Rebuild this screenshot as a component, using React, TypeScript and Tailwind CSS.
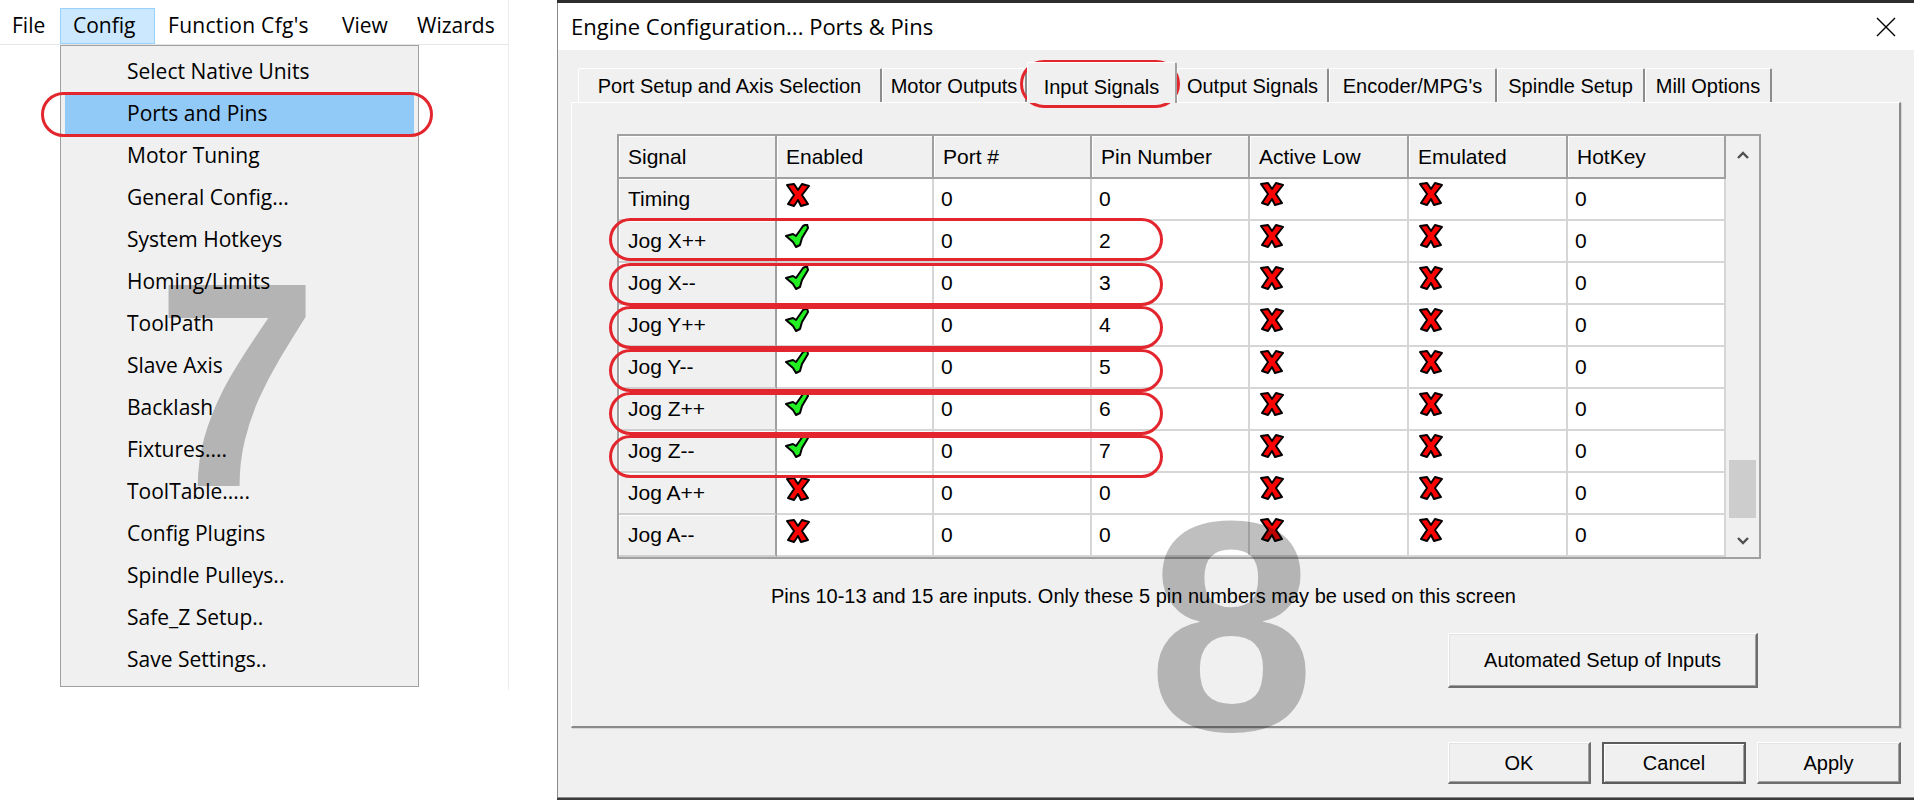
import React from "react";

type Mark = "x" | "ok";
type Row = { signal: string; enabled: Mark; port: string; pin: string };

const ROWS: Row[] = [
  { signal: "Timing", enabled: "x", port: "0", pin: "0" },
  { signal: "Jog X++", enabled: "ok", port: "0", pin: "2" },
  { signal: "Jog X--", enabled: "ok", port: "0", pin: "3" },
  { signal: "Jog Y++", enabled: "ok", port: "0", pin: "4" },
  { signal: "Jog Y--", enabled: "ok", port: "0", pin: "5" },
  { signal: "Jog Z++", enabled: "ok", port: "0", pin: "6" },
  { signal: "Jog Z--", enabled: "ok", port: "0", pin: "7" },
  { signal: "Jog A++", enabled: "x", port: "0", pin: "0" },
  { signal: "Jog A--", enabled: "x", port: "0", pin: "0" },
];

const HEADERS = ["Signal", "Enabled", "Port #", "Pin Number", "Active Low", "Emulated", "HotKey"];

const MENU_ITEMS = [
  "Select Native Units",
  "Ports and Pins",
  "Motor Tuning",
  "General Config...",
  "System Hotkeys",
  "Homing/Limits",
  "ToolPath",
  "Slave Axis",
  "Backlash",
  "Fixtures....",
  "ToolTable.....",
  "Config Plugins",
  "Spindle Pulleys..",
  "Safe_Z Setup..",
  "Save Settings..",
];

const TABS = [
  { label: "Port Setup and Axis Selection", w: "w-[304px]" },
  { label: "Motor Outputs", w: "w-[145px]" },
  { label: "Input Signals", w: "w-[150px]", active: true },
  { label: "Output Signals", w: "w-[152px]" },
  { label: "Encoder/MPG's", w: "w-[168px]" },
  { label: "Spindle Setup", w: "w-[148px]" },
  { label: "Mill Options", w: "w-[127px]" },
];

// red marker rings drawn over the rows that were changed
const ROW_RINGS = ["top-[218px]", "top-[263px]", "top-[306px]", "top-[349px]", "top-[392px]", "top-[435px]"];

const WIN = "font-['Liberation_Sans',Arial,sans-serif]";
const UI = "font-['Open_Sans','Noto_Sans',sans-serif]";

function XMark() {
  return (
    <svg width="26" height="26" viewBox="0 0 26 26">
      <polygon
        points="2,3 9,2 13,8 17,2 24,4 17,13 23,22 16,24 13,18 9,24 3,22 9,13"
        fill="#ff0000"
        stroke="#000"
        strokeWidth="2"
        strokeLinejoin="round"
      />
    </svg>
  );
}

function CheckMark() {
  return (
    <svg width="26" height="24" viewBox="0 0 26 24">
      <polygon
        points="1,12 8,10 11,12 18,2 22,0 23,4 17,14 15,21 11,23 8,18"
        fill="#22ee22"
        stroke="#000"
        strokeWidth="2"
        strokeLinejoin="round"
      />
    </svg>
  );
}

function Icon({ mark }: { mark: Mark }) {
  return mark === "x" ? <XMark /> : <CheckMark />;
}

function WinButton({ label, className, isDefault }: { label: string; className: string; isDefault?: boolean }) {
  return (
    <div
      className={
        isDefault
          ? `flex items-center justify-center border-2 border-[#5c5c5c] bg-[#f0f0f0] text-[20px] text-black shadow-[inset_1px_1px_0_#fff,inset_-1px_-1px_0_#a0a0a0] ${className}`
          : `flex items-center justify-center border-t border-l border-white border-r-2 border-b-2 border-r-[#6e6e6e] border-b-[#6e6e6e] bg-[#f0f0f0] text-[20px] text-black shadow-[inset_1px_1px_0_#e3e3e3,inset_-1px_-1px_0_#a0a0a0] ${className}`
      }
    >
      {label}
    </div>
  );
}

function Ring({ className }: { className: string }) {
  return <div className={`pointer-events-none absolute rounded-full border-[3px] border-[#e3262d] ${className}`} />;
}

function MenuSide() {
  return (
    <div className={`w-[557px] shrink-0 ${UI}`}>
      <div className="h-[690px] w-[509px] border-r border-[#ececec]">
        {/* menu bar */}
        <div className="flex h-[45px] items-end border-b border-[#e6e6e6] text-[21px] text-black">
          <div className="flex h-[36px] w-[60px] items-center pl-[12px]">File</div>
          <div className="flex h-[36px] w-[95px] items-center border border-[#99d1ff] bg-[#cce8ff] pl-[12px]">Config</div>
          <div className="flex h-[36px] w-[174px] items-center pl-[13px] tracking-[0.3px]">Function Cfg's</div>
          <div className="flex h-[36px] w-[75px] items-center pl-[13px]">View</div>
          <div className="flex h-[36px] w-[104px] items-center pl-[13px]">Wizards</div>
        </div>

        {/* config dropdown */}
        <div className="ml-[60px] w-[359px] border border-[#a0a0a0] bg-[#f0f0f0] py-[5px] text-[21px] text-black">
          {MENU_ITEMS.map((item) => (
            <div
              key={item}
              className={
                item === "Ports and Pins"
                  ? "mx-[4px] flex h-[42px] items-center bg-[#91c9f7] pl-[62px]"
                  : "mx-[4px] flex h-[42px] items-center pl-[62px]"
              }
            >
              {item}
            </div>
          ))}
        </div>
      </div>
    </div>
  );
}

function SignalGrid() {
  return (
    <div className="flex h-[425px] w-[1144px] border-2 border-[#a0a0a0] bg-white">
      <div className="grid grid-cols-[158px_157px_158px_158px_159px_159px_158px] content-start">
        {HEADERS.map((h) => (
          <div
            key={h}
            className="flex h-[43px] items-center border-r-2 border-b-2 border-[#a0a0a0] bg-[#f0f0f0] pl-[9px] text-[21px] shadow-[inset_1px_1px_0_#fff]"
          >
            {h}
          </div>
        ))}
        {ROWS.map((r) => (
          <React.Fragment key={r.signal}>
            <div className="flex h-[42px] items-center border-r-2 border-b-2 border-r-[#a0a0a0] border-b-[#cfcfcf] bg-[#f0f0f0] pl-[9px] text-[21px] shadow-[inset_1px_1px_0_#fff]">
              {r.signal}
            </div>
            <div className="flex h-[42px] items-start border-r-2 border-b-2 border-[#d6d6d6] pl-[8px] pt-[3px]">
              <Icon mark={r.enabled} />
            </div>
            <div className="flex h-[42px] items-center border-r-2 border-b-2 border-[#d6d6d6] pl-[7px] text-[21px]">{r.port}</div>
            <div className="flex h-[42px] items-center border-r-2 border-b-2 border-[#d6d6d6] pl-[7px] text-[21px]">{r.pin}</div>
            <div className="flex h-[42px] items-start border-r-2 border-b-2 border-[#d6d6d6] pl-[9px] pt-[2px]">
              <XMark />
            </div>
            <div className="flex h-[42px] items-start border-r-2 border-b-2 border-[#d6d6d6] pl-[9px] pt-[2px]">
              <XMark />
            </div>
            <div className="flex h-[42px] items-center border-r-2 border-b-2 border-[#d6d6d6] pl-[7px] text-[21px]">0</div>
          </React.Fragment>
        ))}
      </div>

      {/* vertical scrollbar */}
      <div className="relative flex w-[33px] flex-col items-center justify-between bg-[#f0f0f0] pt-[13px] pb-[10px]">
        <svg width="16" height="12" viewBox="0 0 16 12">
          <path d="M3 9 L8 4 L13 9" fill="none" stroke="#505050" strokeWidth="2.4" />
        </svg>
        <div className="absolute left-[3px] top-[324px] h-[58px] w-[27px] bg-[#cdcdcd]" />
        <svg width="16" height="12" viewBox="0 0 16 12">
          <path d="M3 3 L8 8 L13 3" fill="none" stroke="#505050" strokeWidth="2.4" />
        </svg>
      </div>
    </div>
  );
}

function Dialog() {
  return (
    <div className="flex flex-1 flex-col">
      <div className="h-[3px] bg-[#2e2e2e]" />
      <div className="flex h-[795px] flex-col border-l border-b border-[#8a8a8a] bg-[#f0f0f0]">
        {/* title bar */}
        <div className="flex h-[47px] items-center justify-between bg-white pl-[13px] pr-[20px]">
          <span className={`text-[22px] text-black ${UI}`}>Engine Configuration... Ports &amp; Pins</span>
          <svg width="20" height="20" viewBox="0 0 20 20">
            <path d="M1 1 L19 19 M19 1 L1 19" stroke="#000" strokeWidth="1.4" />
          </svg>
        </div>

        <div className={`flex-1 pl-[13px] pr-[15px] pt-[12px] text-black ${WIN}`}>
          {/* tabs */}
          <div className="flex h-[40px] items-end pl-[7px]">
            {TABS.map((t) =>
              t.active ? (
                <div
                  key={t.label}
                  className={`relative z-10 -mb-px flex h-[41px] items-start justify-center rounded-t-[2px] border-l border-t border-white border-r-2 border-r-[#a0a0a0] bg-[#f0f0f0] pt-[9px] text-[20px] ${t.w}`}
                >
                  {t.label}
                </div>
              ) : (
                <div
                  key={t.label}
                  className={`flex h-[34px] items-center justify-center rounded-t-[2px] border-l border-t border-white border-r-2 border-r-[#8c8c8c] bg-[#f0f0f0] text-[20px] ${t.w}`}
                >
                  {t.label}
                </div>
              )
            )}
          </div>

          {/* tab page */}
          <div className="h-[626px] border-t border-l border-white border-r-2 border-b-2 border-r-[#8a8a8a] border-b-[#8a8a8a] pl-[45px] pt-[31px] shadow-[1px_1px_0_#d8d8d8]">
            <SignalGrid />
            <div className="mt-[25px] flex h-[24px] items-center pl-[154px] text-[20px]">
              Pins 10-13 and 15 are inputs. Only these 5 pin numbers may be used on this screen
            </div>
            <WinButton label="Automated Setup of Inputs" className="ml-[831px] mt-[25px] h-[55px] w-[310px]" />
          </div>

          {/* dialog buttons */}
          <div className="ml-[877px] mt-[14px] flex gap-[11px]">
            <WinButton label="OK" className="h-[42px] w-[143px]" />
            <WinButton label="Cancel" className="h-[42px] w-[144px]" isDefault />
            <WinButton label="Apply" className="h-[42px] w-[144px]" />
          </div>
        </div>
      </div>
      <div className="h-[2px] bg-[#3a3a3a]" />
    </div>
  );
}

export default function App() {
  return (
    <div className="relative flex h-[800px] w-[1914px] overflow-hidden bg-white">
      <MenuSide />
      <Dialog />

      {/* step numbers */}
      <span className="pointer-events-none absolute left-[156px] top-[239px] font-['Liberation_Sans',Arial,sans-serif] text-[292px] font-bold leading-none text-black/25">
        7
      </span>
      <span className="pointer-events-none absolute left-[1148px] top-[476px] font-['Liberation_Sans',Arial,sans-serif] text-[300px] font-bold leading-none text-black/25">
        8
      </span>

      {/* highlight rings */}
      <Ring className="left-[41px] top-[92px] h-[45px] w-[392px]" />
      <Ring className="left-[1020px] top-[60px] h-[48px] w-[160px]" />
      {ROW_RINGS.map((top) => (
        <Ring key={top} className={`left-[609px] h-[43px] w-[554px] ${top}`} />
      ))}
    </div>
  );
}
